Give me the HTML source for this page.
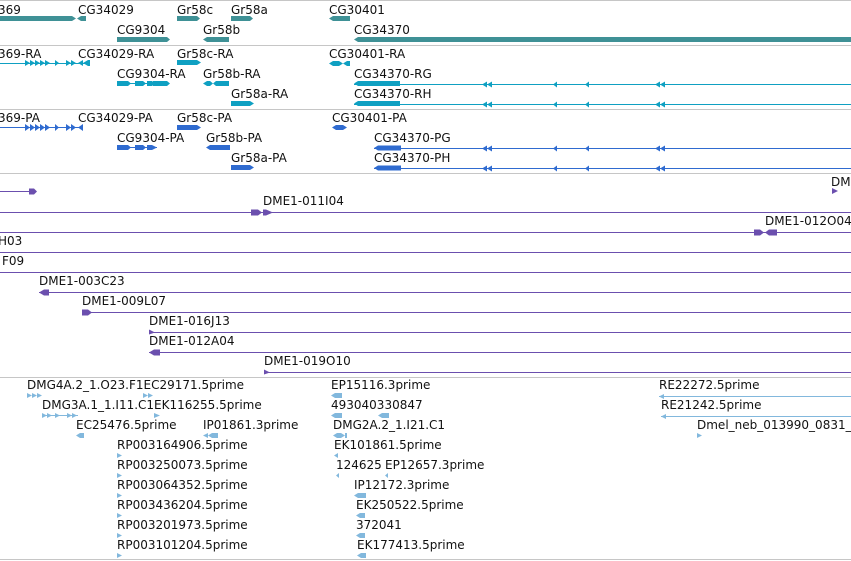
<!DOCTYPE html>
<html><head><meta charset="utf-8"><style>
html,body{margin:0;padding:0;background:#fff;width:851px;height:561px;overflow:hidden}
svg text{font-family:"DejaVu Sans","Liberation Sans",sans-serif;font-size:12px;fill:#111}
svg rect{shape-rendering:crispEdges}
</style></head><body>
<svg width="851" height="561" viewBox="0 0 851 561" xmlns="http://www.w3.org/2000/svg">
<g fill="#c6c6c6">
<rect x="0" y="0" width="851" height="1"/>
<rect x="0" y="45" width="851" height="1"/>
<rect x="0" y="109" width="851" height="1"/>
<rect x="0" y="173" width="851" height="1"/>
<rect x="0" y="377" width="851" height="1"/>
<rect x="0" y="559" width="851" height="1"/>
</g>
<g fill="#3f9196">
<path d="M0 16H72L76 18.5L72 21H0Z"/>
<path d="M77 18.5L81 16H86V21H81Z"/>
<path d="M177 16H197L200 18.5L197 21H177Z"/>
<path d="M231 16H250L253 18.5L250 21H231Z"/>
<path d="M329 18.5L333 16H350V21H333Z"/>
<path d="M117 37H167L170 39.5L167 42H117Z"/>
<path d="M203 39.5L207 37H229V42H207Z"/>
<path d="M354 39.5L358 37H851V42H358Z"/>
</g>
<text x="-2" y="14">369</text><text x="78" y="14">CG34029</text><text x="177" y="14">Gr58c</text><text x="231" y="14">Gr58a</text><text x="329" y="14">CG30401</text>
<text x="117" y="34">CG9304</text><text x="203" y="34">Gr58b</text><text x="354" y="34">CG34370</text>
<g fill="#0fa0c2">
<rect x="0" y="63" width="90" height="1"/>
<path d="M25 60L30 63L25 66ZM30 60L35 63L30 66ZM35 60L40 63L35 66ZM40 60L45 63L40 66ZM45 60L50 63L45 66ZM55 60L59 63L55 66ZM66 60L71 63L66 66ZM71 60L76 63L71 66ZM78 63L83 60V66ZM83 63L88 60H90V66H88Z"/>
<path d="M177 60H197L201 62.5L197 65H177Z"/>
<path d="M329 63.5L333 61H339L343 63.5L339 66H333ZM343 63.5L347 61H350V66H347Z"/>
<rect x="117" y="83" width="52" height="1"/>
<path d="M117 81H128L131 83.5L128 86H117ZM135 81H143L146 83.5L143 86H135ZM147 81H152L155 83.5L152 86H147ZM153 81H167L170 83.5L167 86H153Z"/>
<path d="M203 83.5L207 81H210L213 83.5L216 81H229V86H216L213 83.5L210 86H207Z"/>
<rect x="354" y="84" width="497" height="1"/>
<path d="M354 83.5L358 81H400V86H358Z"/>
<rect x="354" y="104" width="497" height="1"/>
<path d="M354 103.5L358 101H400V106H358Z"/>
<path d="M231 101H250L254 103.5L250 106H231Z"/>
<path d="M482 84.5L487 81.5V87.5ZM487 84.5L492 81.5V87.5ZM553 84.5L557 81.5V87.5ZM585 84.5L589 81.5V87.5ZM655 84.5L660 81.5V87.5ZM660 84.5L665 81.5V87.5Z"/>
<path d="M482 104.5L487 101.5V107.5ZM487 104.5L492 101.5V107.5ZM553 104.5L557 101.5V107.5ZM585 104.5L589 101.5V107.5ZM655 104.5L660 101.5V107.5ZM660 104.5L665 101.5V107.5Z"/>
</g>
<text x="-2" y="58">369-RA</text><text x="78" y="58">CG34029-RA</text><text x="177" y="58">Gr58c-RA</text><text x="329" y="58">CG30401-RA</text>
<text x="117" y="78">CG9304-RA</text><text x="203" y="78">Gr58b-RA</text><text x="354" y="78">CG34370-RG</text>
<text x="231" y="98">Gr58a-RA</text><text x="354" y="98">CG34370-RH</text>
<g fill="#2f6bd0">
<rect x="0" y="127" width="82" height="1"/>
<path d="M25 124L30 127.5L25 131ZM30 124L35 127.5L30 131ZM35 124L40 127.5L35 131ZM40 124L45 127.5L40 131ZM45 124L50 127.5L45 131ZM55 124L59 127.5L55 131ZM66 124L71 127.5L66 131ZM71 124L76 127.5L71 131ZM78 127.5L83 124V131Z"/>
<path d="M177 125H197L201 127.5L197 130H177Z"/>
<path d="M332 127.5L336 125H343L347 127.5L343 130H336Z"/>
<rect x="117" y="147" width="40" height="1"/>
<path d="M117 145H128L131 147.5L128 150H117ZM135 145H143L146 147.5L143 150H135ZM147 145H152L157 147.5L152 150H147Z"/>
<path d="M206 147.5L210 145H230V150H210Z"/>
<path d="M231 165H250L254 167.5L250 170H231Z"/>
<rect x="374" y="148" width="477" height="1"/>
<path d="M374 148L378 145.5H401V150.5H378Z"/>
<rect x="374" y="168" width="477" height="1"/>
<path d="M374 168L378 165.5H401V170.5H378Z"/>
<path d="M482 148.5L487 145.5V151.5ZM487 148.5L492 145.5V151.5ZM553 148.5L557 145.5V151.5ZM585 148.5L589 145.5V151.5ZM655 148.5L660 145.5V151.5ZM660 148.5L665 145.5V151.5Z"/>
<path d="M482 168.5L487 165.5V171.5ZM487 168.5L492 165.5V171.5ZM553 168.5L557 165.5V171.5ZM585 168.5L589 165.5V171.5ZM655 168.5L660 165.5V171.5ZM660 168.5L665 165.5V171.5Z"/>
</g>
<text x="-2" y="122">369-PA</text><text x="78" y="122">CG34029-PA</text><text x="177" y="122">Gr58c-PA</text><text x="332" y="122">CG30401-PA</text>
<text x="117" y="142">CG9304-PA</text><text x="206" y="142">Gr58b-PA</text><text x="374" y="142">CG34370-PG</text>
<text x="231" y="162">Gr58a-PA</text><text x="374" y="162">CG34370-PH</text>
<g fill="#6b4fae">
<rect x="0" y="191" width="30" height="1"/><path d="M29 188.5H34L37 191.5L34 194.5H29Z"/>
<path d="M832 188L838 191L832 194Z"/>
<rect x="0" y="212" width="851" height="1"/>
<path d="M251 209.5H258L262 212.5L258 215.5H251ZM263 209.5H266L273 212.5L266 215.5H263Z"/>
<rect x="0" y="232" width="851" height="1"/>
<path d="M754 229.5H760L764 232.5L760 235.5H754ZM765 232.5L769 229.5H777V235.5H769Z"/>
<rect x="0" y="252" width="851" height="1"/>
<rect x="0" y="272" width="851" height="1"/>
<rect x="39" y="292" width="812" height="1"/><path d="M39 292.5L44 289.5H49V295.5H44Z"/>
<rect x="82" y="312" width="769" height="1"/><path d="M82 309.5H88L92 312.5L88 315.5H82Z"/>
<rect x="149" y="332" width="702" height="1"/><path d="M149 329.5L155 332.5L149 334.5Z"/>
<rect x="149" y="352" width="702" height="1"/><path d="M149 352.5L154 349.5H160V355.5H154Z"/>
<rect x="264" y="372" width="587" height="1"/><path d="M264 369.5L270 372.5L264 374.5Z"/>
</g>
<text x="831" y="186">DME1</text>
<text x="263" y="205">DME1-011I04</text>
<text x="765" y="225">DME1-012O04</text>
<text x="-2" y="245">H03</text>
<text x="2" y="265">F09</text>
<text x="39" y="285">DME1-003C23</text>
<text x="82" y="305">DME1-009L07</text>
<text x="149" y="325">DME1-016J13</text>
<text x="149" y="345">DME1-012A04</text>
<text x="264" y="365">DME1-019O10</text>
<g fill="#82b8dd">
<path d="M27 393L32 395.5L27 398ZM32 393L37 395.5L32 398ZM37 393L42 395.5L37 398Z"/>
<path d="M143 393L148 395.5L143 398ZM148 393L153 395.5L148 398Z"/>
<rect x="42" y="415" width="36" height="1"/>
<path d="M42 413L47 415.5L42 418ZM47 413L52 415.5L47 418ZM55 413L60 415.5L55 418ZM67 413L72 415.5L67 418ZM72 413L77 415.5L72 418Z"/>
<path d="M154 413L160 415.5L154 418Z"/>
<path d="M76 435.5L80 433H84V438H80Z"/>
<path d="M203 435.5L208 433V438ZM208 435.5L212 433H218V438H212Z"/>
<path d="M117 453L122 455.5L117 458Z M117 473L122 475.5L117 478Z M117 493L122 495.5L117 498Z M117 513L122 515.5L117 518Z M117 533L122 535.5L117 538Z M117 553L122 555.5L117 558Z"/>
<path d="M331 395.5L335 393H342V398H335Z"/>
<path d="M331 415.5L335 413H342V418H335ZM378 415.5L382 413H389V418H382Z"/>
<path d="M333 435.5L337 433H341L345 435.5V433H347V438H345V435.5L341 438H337Z"/>
<path d="M334 455.5L338 453V458Z"/>
<path d="M336 475.5L339 473V478ZM385 475.5L388 473V478Z"/>
<path d="M354 495.5L358 493H366V498H358Z"/>
<path d="M356 515.5L360 513H365V518H360Z"/>
<path d="M356 535.5L360 533H365V538H360Z"/>
<path d="M357 555.5L361 553H366V558H361Z"/>
<rect x="659" y="396" width="192" height="1"/><path d="M659 396.5L664 394V399Z"/>
<rect x="661" y="416" width="190" height="1"/><path d="M661 416.5L666 414V419Z"/>
<path d="M697 433L702 435.5L697 438Z"/>
</g>
<text x="27" y="389">DMG4A.2_1.O23.F1EC29171.5prime</text>
<text x="42" y="409">DMG3A.1_1.I11.C1EK116255.5prime</text>
<text x="76" y="429">EC25476.5prime</text><text x="203" y="429">IP01861.3prime</text>
<text x="117" y="449">RP003164906.5prime</text>
<text x="117" y="469">RP003250073.5prime</text>
<text x="117" y="489">RP003064352.5prime</text>
<text x="117" y="509">RP003436204.5prime</text>
<text x="117" y="529">RP003201973.5prime</text>
<text x="117" y="549">RP003101204.5prime</text>
<text x="331" y="389">EP15116.3prime</text>
<text x="331" y="409">493040330847</text>
<text x="333" y="429">DMG2A.2_1.I21.C1</text>
<text x="334" y="449">EK101861.5prime</text>
<text x="336" y="469">124625</text><text x="385" y="469">EP12657.3prime</text>
<text x="354" y="489">IP12172.3prime</text>
<text x="356" y="509">EK250522.5prime</text>
<text x="356" y="529">372041</text>
<text x="357" y="549">EK177413.5prime</text>
<text x="659" y="389">RE22272.5prime</text>
<text x="661" y="409">RE21242.5prime</text>
<text x="697" y="429">Dmel_neb_013990_0831_</text>
</svg>
</body></html>
